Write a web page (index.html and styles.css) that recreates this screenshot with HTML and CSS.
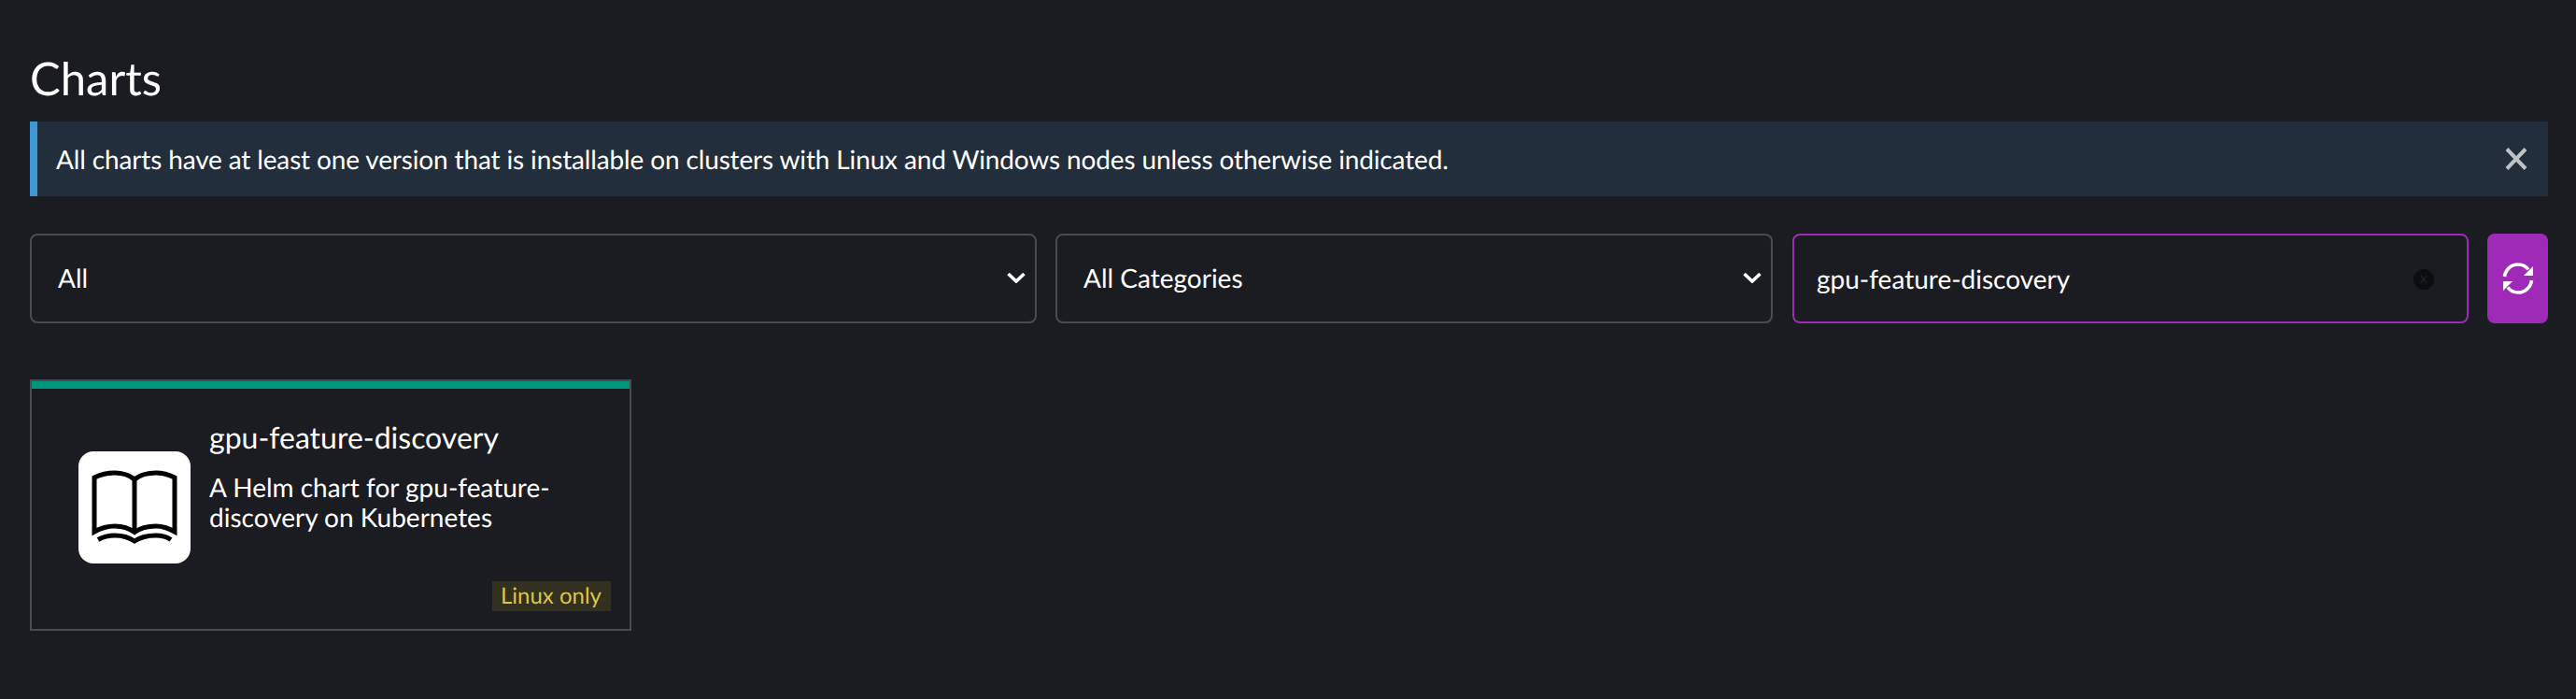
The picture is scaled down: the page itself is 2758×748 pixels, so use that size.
FILE: index.html
```html
<!DOCTYPE html>
<html lang="en">
<head>
<meta charset="utf-8">
<title>Charts</title>
<link rel="stylesheet" href="styles.css">
</head>
<body>
<main class="page">
  <h1 class="page-title">Charts</h1>
  <div class="banner">
    <span class="banner-text">All charts have at least one version that is installable on clusters with Linux and Windows nodes unless otherwise indicated.</span>
    <svg class="banner-close" viewBox="0 0 24 24" aria-hidden="true"><path d="M2 1.5 22 22.5M22 1.5 2 22.5"/></svg>
  </div>
  <div class="filters">
    <div class="field select-repo">
      <span>All</span>
      <svg class="chevron" viewBox="0 0 20 12" aria-hidden="true"><path d="M1.500 2l8.500 8 8.500-8"/></svg>
    </div>
    <div class="field select-category">
      <span>All Categories</span>
      <svg class="chevron" viewBox="0 0 20 12" aria-hidden="true"><path d="M1.500 2l8.500 8 8.500-8"/></svg>
    </div>
    <div class="field search">
      <span>gpu-feature-discovery</span>
      <span class="search-clear">x</span>
    </div>
    <button class="refresh" type="button" aria-label="Refresh">
      <svg viewBox="0 0 36 36" aria-hidden="true">
        <path class="refresh-arc" d="M3.500 16C4.500 8.500 10.500 3 18 3C22.500 3 26.500 5 29 8.500"/>
        <path class="refresh-arc" d="M32.500 20C31.500 27.500 25.500 33 18 33C13.500 33 9.500 31 7 27.500"/>
        <path class="refresh-head" d="M34 5V15H24Z"/>
        <path class="refresh-head" d="M2 31V21H12Z"/>
      </svg>
    </button>
  </div>
  <article class="card">
    <div class="card-bar"></div>
    <div class="card-body">
      <div class="card-icon">
        <svg viewBox="0 0 120 120" aria-hidden="true">
          <path d="M17 86V28C24 24.500 32 23 39 23C47 23 54 25 60 30C66 25 74 23 83 23C90 23 96 24.500 103 28V86C96 82 90 80 83 80C74 80 66 82 60 86.500C54 82 47 80 39 80C32 80 24 82 17 86Z"/>
          <path d="M60 30V86"/>
          <path d="M21 94.500C27 91 33 90 39 90C47 90 54 92 60 96C66 92 74 90 83 90C88 90 94 91 99 94.500"/>
        </svg>
      </div>
      <div class="card-text">
        <h2 class="card-title">gpu-feature-discovery</h2>
        <p class="card-desc">A Helm chart for gpu-feature-discovery on Kubernetes</p>
      </div>
    </div>
    <span class="card-badge">Linux only</span>
  </article>
</main>
</body>
</html>
```

FILE: styles.css
```css
* {
  box-sizing: border-box;
}

html,
body {
  margin: 0;
  height: 100%;
  background: #1b1c21;
}

body {
  color: #ffffff;
  font-family: Lato, "Liberation Sans", sans-serif;
  font-size: 28px;
  text-rendering: geometricPrecision;
}

.page {
  padding: 60px 30px 0 32px;
}

.page-title {
  margin: 0 0 22px;
  font-size: 49px;
  font-weight: 400;
  line-height: 48px;
}

.banner {
  display: flex;
  align-items: center;
  justify-content: space-between;
  height: 80px;
  padding: 0 22px 0 20px;
  background: #222e3c;
  border-left: 8px solid #3d98d3;
  line-height: 40px;
}

.banner-text {
  letter-spacing: -0.14px;
}

.banner-close {
  width: 24px;
  height: 24px;
  fill: none;
  stroke: #bfc1c4;
  stroke-width: 4;
}

.filters {
  display: flex;
  align-items: stretch;
  height: 96px;
  margin-top: 40px;
}

.field {
  display: flex;
  align-items: center;
  justify-content: space-between;
  border: 2px solid #4b4c52;
  border-radius: 8px;
  line-height: 40px;
}

.select-repo {
  width: 1078px;
  padding: 0 10px 2px 28px;
  margin-right: 20px;
}

.select-category {
  width: 768px;
  padding: 0 10px 2px 28px;
  margin-right: 21px;
}

.chevron {
  width: 20px;
  height: 12px;
  fill: none;
  stroke: #ffffff;
  stroke-width: 3.6;
}

.search {
  width: 724px;
  padding: 0 35px 0 24px;
  margin-right: 20px;
  border-color: #a02ab8;
}

.search-clear {
  width: 22px;
  height: 22px;
  margin-top: 2px;
  border-radius: 50%;
  background: #0c0d10;
  color: #1f2024;
  font-size: 16px;
  line-height: 20px;
  text-align: center;
}

.refresh {
  display: flex;
  align-items: center;
  justify-content: center;
  width: 65px;
  padding: 0;
  border: 0;
  border-radius: 8px;
  background: #a02ab8;
}

.refresh svg {
  width: 36px;
  height: 36px;
}

.refresh-arc {
  fill: none;
  stroke: #ffffff;
  stroke-width: 3.6;
}

.refresh-head {
  fill: #ffffff;
}

.card {
  position: relative;
  width: 644px;
  height: 269px;
  margin-top: 60px;
  border: 2px solid #4b4c52;
}

.card-bar {
  height: 8px;
  background: #00957e;
}

.card-body {
  display: flex;
  gap: 20px;
  padding: 32px 24px 0 50px;
}

.card-icon {
  flex: none;
  width: 120px;
  height: 120px;
  margin-top: 35px;
  border-radius: 16px;
  background: #ffffff;
}

.card-icon svg {
  display: block;
  width: 120px;
  height: 120px;
  fill: none;
  stroke: #000000;
  stroke-width: 5;
}

.card-title {
  margin: 0 0 17px;
  font-size: 32px;
  font-weight: 400;
  line-height: 40px;
}

.card-desc {
  margin: 0;
  font-size: 28px;
  line-height: 32px;
}

.card-badge {
  position: absolute;
  right: 20px;
  bottom: 19px;
  height: 32px;
  padding: 0 10px 0 9px;
  background: #33301f;
  color: #d9c74a;
  font-size: 24px;
  line-height: 32px;
}
```
